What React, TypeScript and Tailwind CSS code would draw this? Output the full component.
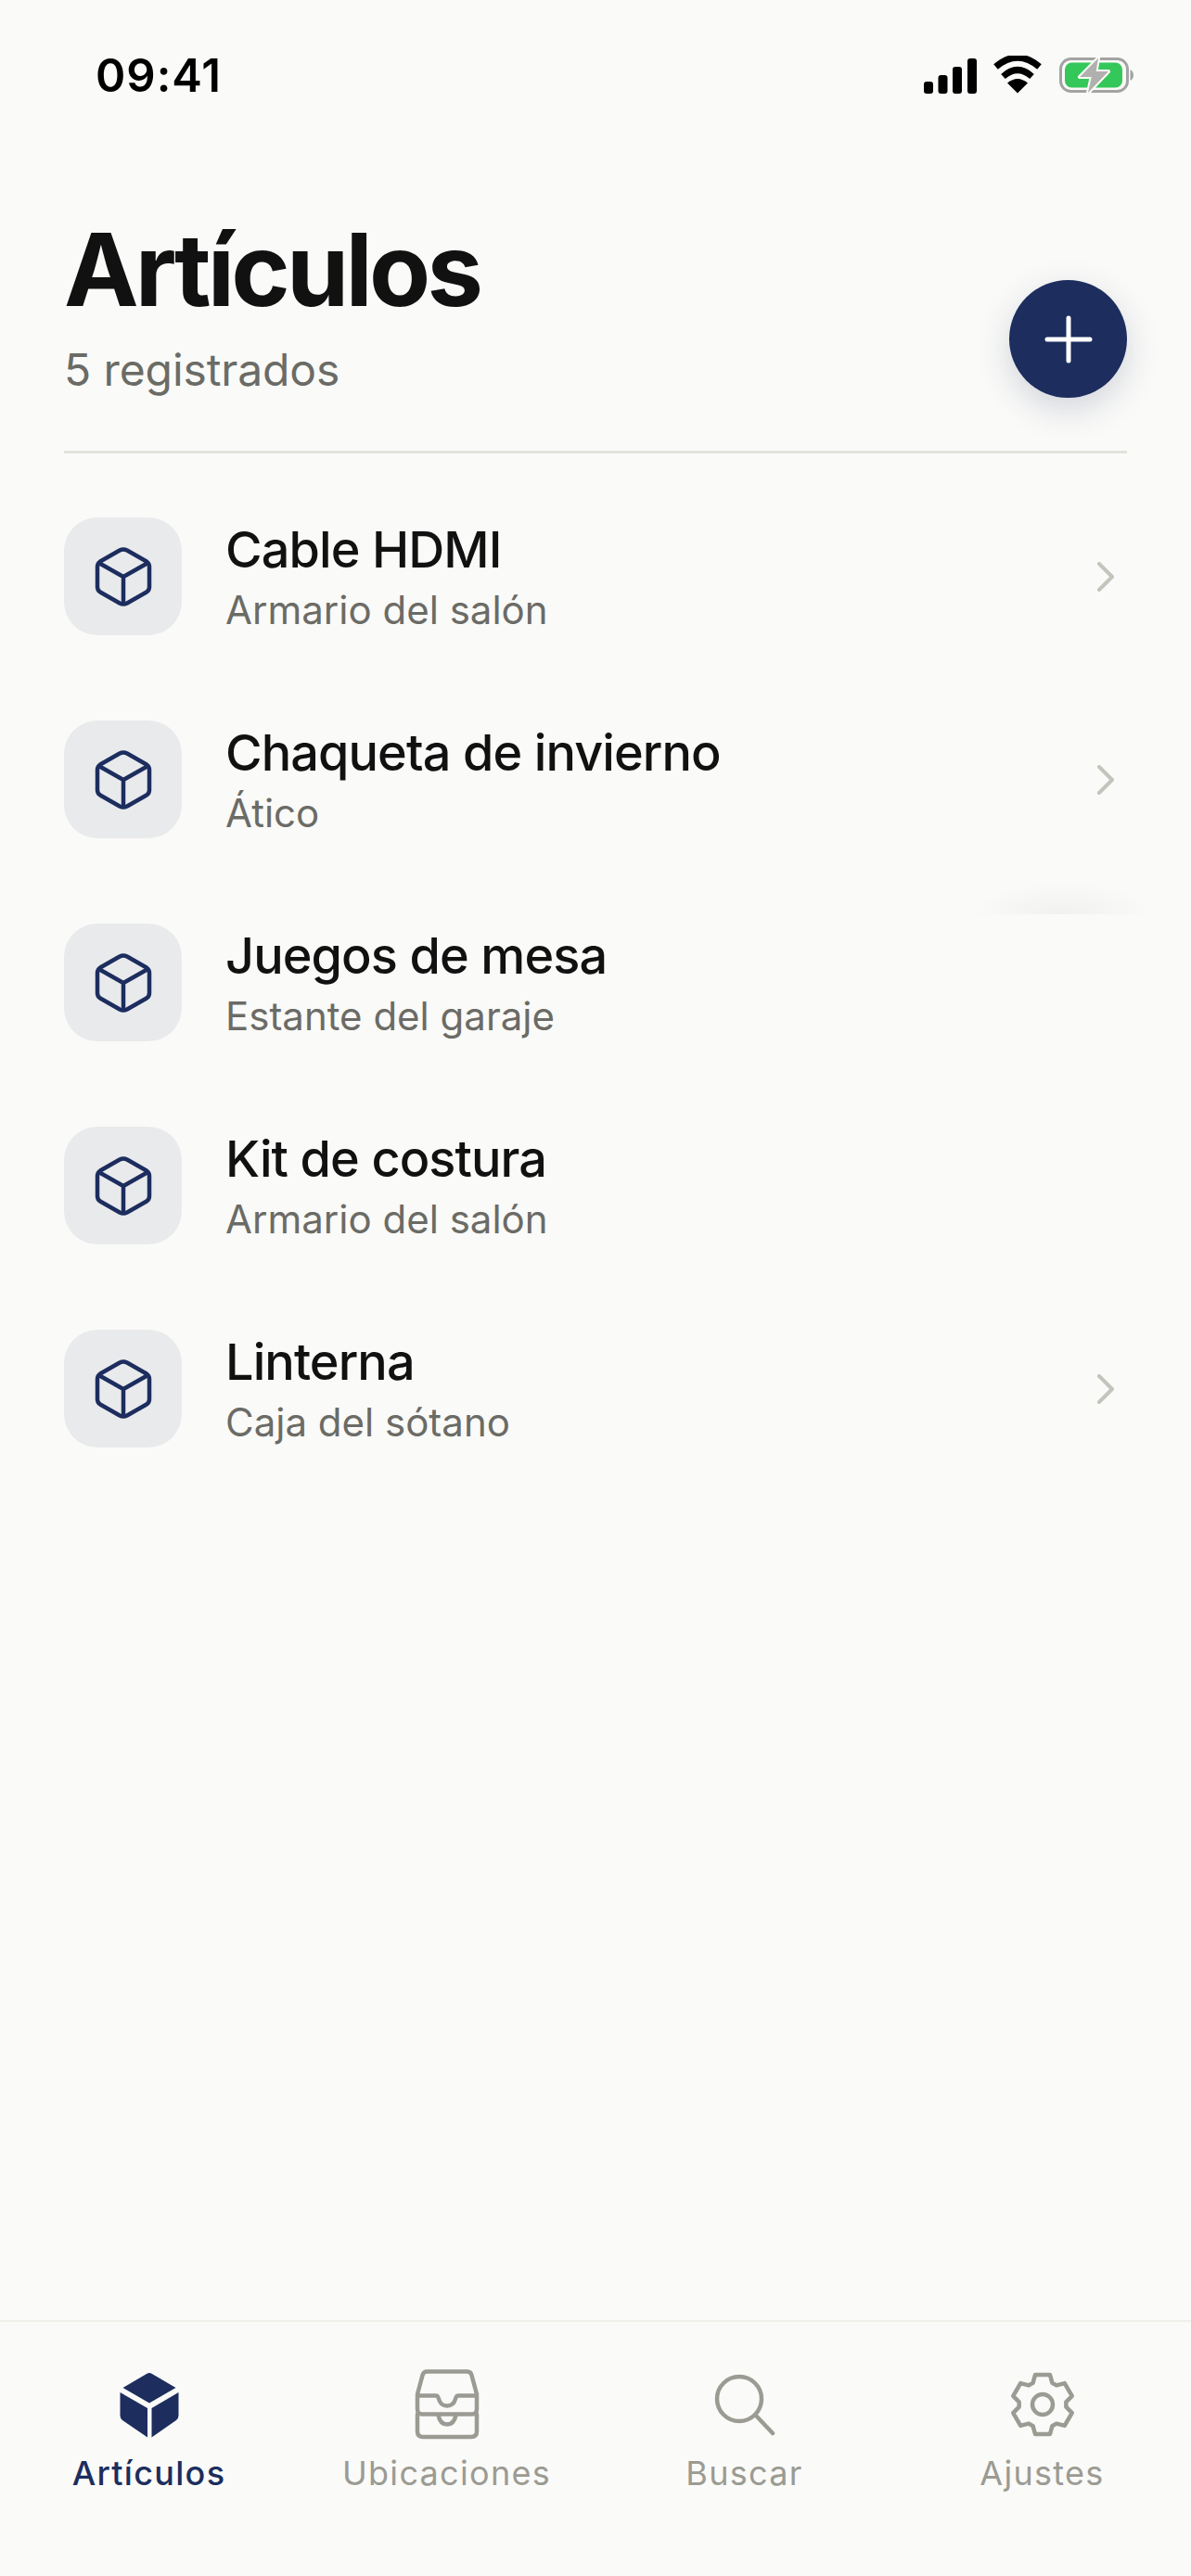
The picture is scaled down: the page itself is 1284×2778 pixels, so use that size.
const items = [
  { name: "Cable HDMI", place: "Armario del salón", chevron: true },
  { name: "Chaqueta de invierno", place: "Ático", chevron: true },
  { name: "Juegos de mesa", place: "Estante del garaje", chevron: false },
  { name: "Kit de costura", place: "Armario del salón", chevron: false },
  { name: "Linterna", place: "Caja del sótano", chevron: true },
];

// six teeth, flat on top and bottom
const gearPoints = [0, 1, 2, 3, 4, 5]
  .flatMap((i) => {
    const mid = -90 + i * 60;
    return [
      [25.5, mid - 24],
      [33, mid - 14],
      [33, mid + 14],
      [25.5, mid + 24],
    ];
  })
  .map(([r, deg]) => {
    const rad = (deg * Math.PI) / 180;
    return `${(36 + r * Math.cos(rad)).toFixed(2)},${(36 + r * Math.sin(rad)).toFixed(2)}`;
  })
  .join(" ");

function StatusBar() {
  return (
    <div className="flex h-[226px] shrink-0 items-start justify-between pl-[103px] pr-[60px] pt-[54px]">
      <span className="text-[49px] leading-[56px] font-semibold tracking-[1px] text-black">09:41</span>
      <div className="flex items-start gap-[16px] pt-[6px]">
        <svg width="58" height="40" viewBox="0 0 58 40" className="mt-[3px]" fill="#000">
          <rect x="0" y="25" width="10" height="13" rx="3" />
          <rect x="15.5" y="18" width="10" height="20" rx="3" />
          <rect x="31" y="9" width="10" height="29" rx="3" />
          <rect x="47" y="0" width="10" height="38" rx="3" />
        </svg>
        <svg width="54" height="41" viewBox="0 0 54 41" fill="none">
          <path d="M27 40.5 L16 29.5 Q27 20.5 38 29.5 Z" fill="#000" />
          <path d="M11.5 22.5 Q27 8.5 42.5 22.5" stroke="#000" strokeWidth="7" />
          <path d="M3.5 12 Q27 -8 50.5 12" stroke="#000" strokeWidth="7" />
        </svg>
        <svg width="84" height="42" viewBox="0 0 84 42" fill="none">
          <rect x="3.5" y="3.5" width="72" height="35" rx="11" stroke="#a3a3a3" strokeWidth="3" />
          <rect x="8" y="7.5" width="62" height="27" rx="7.5" fill="#34c759" />
          <path d="M78.5 15 Q82 17 82 21 Q82 25 78.5 27 Z" fill="#a3a3a3" />
          <path
            d="M44 2.7 L24 23 L36.7 23 L33 40 L55 17 L41.7 17 Z"
            fill="#b0b0ae"
            stroke="#fafaf8"
            strokeWidth="4"
            strokeLinejoin="round"
            paintOrder="stroke"
          />
        </svg>
      </div>
    </div>
  );
}

function CubeIcon() {
  return (
    <svg width="64" height="66" viewBox="0 0 64 66" fill="none" stroke="#1c2d5e" strokeWidth="4.5" strokeLinejoin="round">
      <path d="M28 4.5 Q32 2.5 36 4.5 L57 16.5 Q60 18.5 60 22 L60 44 Q60 47.5 57 49.5 L36 61.5 Q32 63.5 28 61.5 L7 49.5 Q4 47.5 4 44 L4 22 Q4 18.5 7 16.5 Z" />
      <path d="M5.5 18 L32 33 L58.5 18 M32 33 L32 62" />
    </svg>
  );
}

function ItemRow({ name, place, chevron }: { name: string; place: string; chevron: boolean }) {
  return (
    <div className="flex h-[127px] items-center">
      <div className="flex size-[127px] shrink-0 items-center justify-center rounded-[36px] bg-[#e9eaec]">
        <CubeIcon />
      </div>
      <div className="ml-[47px] flex-1">
        <div className="text-[54px] leading-[66px] font-medium tracking-[-0.9px] text-[#111111]">{name}</div>
        <div className="mt-[7px] text-[42px] leading-[50px] text-[#6b6b66]">{place}</div>
      </div>
      {chevron && (
        <svg width="20" height="32" viewBox="0 0 20 32" fill="none" stroke="#c4c4bc" strokeWidth="4" strokeLinecap="round" strokeLinejoin="round" className="mr-[13px]">
          <path d="M3 2 L17 16 L3 30" />
        </svg>
      )}
    </div>
  );
}

function TabItem({ label, active, icon }: { label: string; active?: boolean; icon: React.ReactNode }) {
  return (
    <div className="flex flex-col items-center">
      <div className="flex h-[78px] items-center justify-center">{icon}</div>
      <span className={`mt-[13px] text-[36px] leading-[44px] tracking-[1.3px] ${active ? "font-medium text-[#1c2d5e]" : "text-[#9b9b93]"}`}>
        {label}
      </span>
    </div>
  );
}

export default function App() {
  return (
    <div className="relative flex h-[2778px] w-[1284px] flex-col overflow-hidden bg-[#fafaf8] font-['Inter',sans-serif]">
      <StatusBar />

      {/* header */}
      <div className="mx-[69px] flex items-end justify-between border-b-[3px] border-[#e2e2dc] pb-[57px]">
        <div>
          <h1 className="text-[108px] leading-[130px] font-bold tracking-[-3.8px] text-[#111111]">Artículos</h1>
          <p className="mt-[13px] text-[48px] leading-[60px] tracking-[-0.1px] text-[#6b6b66]">5 registrados</p>
        </div>
        <button className="flex size-[127px] items-center justify-center rounded-full bg-[#1c2d5e] shadow-[0_12px_36px_rgba(28,45,94,0.18)]">
          <svg width="52" height="52" viewBox="0 0 52 52" stroke="#fff" strokeWidth="5" strokeLinecap="round">
            <path d="M26 3 V49 M3 26 H49" />
          </svg>
        </button>
      </div>

      {/* list */}
      <div className="mx-[69px] flex flex-1 flex-col gap-[92px] pt-[69px]">
        {items.map((item) => (
          <ItemRow key={item.name} {...item} />
        ))}
      </div>

      <div className="absolute left-[1045px] top-[950px] h-[36px] w-[200px] bg-[radial-gradient(ellipse_at_50%_100%,#f1f1ef_0%,#fafaf8_70%)]" />

      {/* tab bar */}
      <nav className="grid h-[276px] shrink-0 grid-cols-4 border-t-[2px] border-[#f0f0ea] pt-[50px]">
        <TabItem
          label="Artículos"
          active
          icon={
            <svg width="64" height="71" viewBox="0 0 64 71" fill="#1c2d5e">
              <path d="M29.5 1.8 Q32 0.2 34.5 1.8 L60.5 17 L32 33.5 L3.5 17 Z" />
              <path d="M0.5 22 L30 39 L30 70.5 L3 52 Q0.5 50 0.5 47 Z" />
              <path d="M63.5 22 L34.5 39 L34.5 70.5 L61 52 Q63.5 50 63.5 47 Z" />
            </svg>
          }
        />
        <TabItem
          label="Ubicaciones"
          icon={
            <svg width="74" height="78" viewBox="0 0 74 78" fill="none" stroke="#9b9b93" strokeWidth="4.5" strokeLinejoin="round" strokeLinecap="round">
              <path d="M5 28 L10.5 7.5 Q11.5 3.5 15.5 3.5 H58.5 Q62.5 3.5 63.5 7.5 L69 28" />
              <path d="M5 29.5 H25 Q27 29.5 28 33 Q30 40.5 37 40.5 Q44 40.5 46 33 Q47 29.5 49 29.5 H69 V44 Q69 49.5 64 49.5 H10 Q5 49.5 5 44 Z" />
              <path d="M5 49.5 V68 Q5 74 11 74 H63 Q69 74 69 68 V49.5" />
              <path d="M27.5 50.5 Q29.5 60.5 37 60.5 Q44.5 60.5 46.5 50.5" />
            </svg>
          }
        />
        <TabItem
          label="Buscar"
          icon={
            <svg width="66" height="68" viewBox="0 0 66 68" fill="none" stroke="#9b9b93" strokeWidth="4.5" strokeLinecap="round">
              <circle cx="27" cy="28" r="24" />
              <path d="M45 46 L63 65" />
            </svg>
          }
        />
        <TabItem
          label="Ajustes"
          icon={
            <svg width="72" height="72" viewBox="0 0 72 72" fill="none" stroke="#9b9b93" strokeWidth="4.5" strokeLinejoin="round">
              <polygon points={gearPoints} />
              <circle cx="36" cy="36" r="11" />
            </svg>
          }
        />
      </nav>
    </div>
  );
}
